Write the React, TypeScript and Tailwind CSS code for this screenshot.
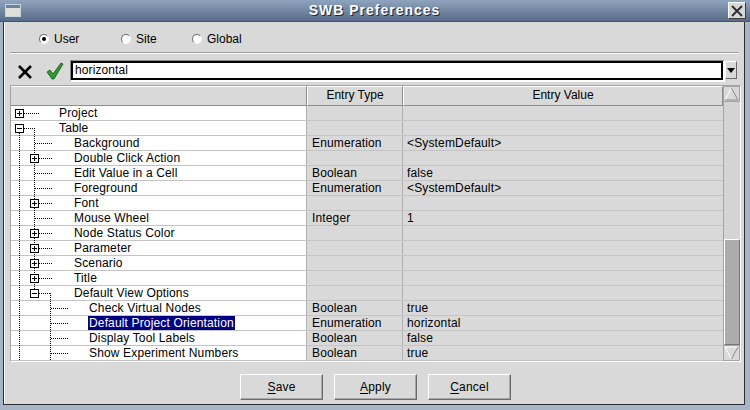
import React from "react";

type Row = {
  label: string;
  depth: 0 | 1 | 2;
  exp?: "+" | "-";
  type?: string;
  value?: string;
  selected?: boolean;
};

const rows: Row[] = [
  { label: "Project", depth: 0, exp: "+" },
  { label: "Table", depth: 0, exp: "-" },
  { label: "Background", depth: 1, type: "Enumeration", value: "<SystemDefault>" },
  { label: "Double Click Action", depth: 1, exp: "+" },
  { label: "Edit Value in a Cell", depth: 1, type: "Boolean", value: "false" },
  { label: "Foreground", depth: 1, type: "Enumeration", value: "<SystemDefault>" },
  { label: "Font", depth: 1, exp: "+" },
  { label: "Mouse Wheel", depth: 1, type: "Integer", value: "1" },
  { label: "Node Status Color", depth: 1, exp: "+" },
  { label: "Parameter", depth: 1, exp: "+" },
  { label: "Scenario", depth: 1, exp: "+" },
  { label: "Title", depth: 1, exp: "+" },
  { label: "Default View Options", depth: 1, exp: "-" },
  { label: "Check Virtual Nodes", depth: 2, type: "Boolean", value: "true" },
  { label: "Default Project Orientation", depth: 2, type: "Enumeration", value: "horizontal", selected: true },
  { label: "Display Tool Labels", depth: 2, type: "Boolean", value: "false" },
  { label: "Show Experiment Numbers", depth: 2, type: "Boolean", value: "true" },
];

const indent = ["pl-[48px]", "pl-[63px]", "pl-[78px]"];

// dotted tree guides + expander boxes, drawn over the tree column
function TreeLines() {
  const X = [8.5, 23.5, 39.5];
  const dots = { stroke: "#000", strokeWidth: 1, strokeDasharray: "1 1" };
  const els: React.ReactElement[] = [];
  els.push(<line key="v0" x1={X[0]} y1={27} x2={X[0]} y2={255} {...dots} />);
  els.push(<line key="v1" x1={X[1]} y1={22} x2={X[1]} y2={188} {...dots} />);
  els.push(<line key="v2" x1={X[2]} y1={187} x2={X[2]} y2={255} {...dots} />);

  rows.forEach((r, i) => {
    const cy = 15 * i + 7.5;
    if (r.depth === 0) {
      els.push(<line key={"h" + i} x1={13} y1={cy} x2={r.exp === "-" ? 24 : 28} y2={cy} {...dots} />);
    } else if (r.depth === 1) {
      const from = r.exp ? 28 : 24;
      const to = r.exp === "-" ? 40 : 42;
      els.push(<line key={"h" + i} x1={from} y1={cy} x2={to} y2={cy} {...dots} />);
    } else {
      els.push(<line key={"h" + i} x1={40} y1={cy} x2={57} y2={cy} {...dots} />);
    }
    if (r.exp) {
      const bx = r.depth === 0 ? 4 : 19;
      const c = bx + 4.5;
      els.push(
        <g key={"b" + i}>
          <rect x={bx + 0.5} y={cy - 4} width={8} height={8} fill="#fff" stroke="#000" />
          <line x1={bx + 2} y1={cy} x2={bx + 7} y2={cy} stroke="#000" />
          {r.exp === "+" && <line x1={c} y1={cy - 2.5} x2={c} y2={cy + 2.5} stroke="#000" />}
        </g>
      );
    }
  });

  return (
    <svg className="absolute left-0 top-0 pointer-events-none" width={296} height={255}>
      {els}
    </svg>
  );
}

function Radio({ label, checked, w }: { label: string; checked?: boolean; w: string }) {
  return (
    <div className={`flex items-center gap-[5px] ${w}`}>
      <span className="w-[10px] h-[10px] rounded-full bg-white border border-t-[#6e6e6e] border-l-[#6e6e6e] border-b-[#f4f4f4] border-r-[#f4f4f4] flex items-center justify-center">
        {checked && <span className="w-[4px] h-[4px] rounded-full bg-black" />}
      </span>
      <span>{label}</span>
    </div>
  );
}

function ArrowButton({ dir }: { dir: "up" | "down" }) {
  return (
    <svg width={17} height={16} className="block shrink-0">
      <rect x={0.5} y={0.5} width={16} height={15} fill="#d9d9d9" stroke="#a4a4a4" />
      {dir === "up" ? (
        <>
          <polygon points="8.5,2 15,14 2,14" fill="#d9d9d9" />
          <line x1={8.5} y1={2} x2={2} y2={14} stroke="#fff" />
          <line x1={8.5} y1={2} x2={15} y2={14} stroke="#8a8a8a" />
          <line x1={2} y1={14} x2={15} y2={14} stroke="#8a8a8a" />
        </>
      ) : (
        <>
          <polygon points="2,2 15,2 8.5,14" fill="#d9d9d9" />
          <line x1={2} y1={2} x2={15} y2={2} stroke="#fff" />
          <line x1={2} y1={2} x2={8.5} y2={14} stroke="#fff" />
          <line x1={15} y1={2} x2={8.5} y2={14} stroke="#8a8a8a" />
        </>
      )}
    </svg>
  );
}

function Button({ mn, rest }: { mn: string; rest: string }) {
  return (
    <button className="w-[83px] h-[26px] bg-[#d9d9d9] border border-t-white border-l-white border-b-[#6c6c6c] border-r-[#6c6c6c] shadow-[inset_-1px_-1px_0_#a6a6a6] text-[12px] tracking-[0.2px] text-black">
      <span className="underline underline-offset-2">{mn}</span>
      {rest}
    </button>
  );
}

export default function App() {
  return (
    <div className="w-[750px] h-[410px] overflow-hidden flex flex-col bg-[#a6b5c8] font-['Liberation_Sans',Arial,sans-serif] text-[12px] text-black select-none">
      {/* title bar */}
      <div className="h-[22px] flex items-center bg-linear-to-b from-[#8fa4be] to-[#586c8a] border-b border-[#44546a]">
        <div className="ml-[5px] w-[16px] h-[13px] border border-[#c9d4e1] bg-[#dedfdb] flex flex-col">
          <div className="h-[3px] bg-[#6a81a0]" />
        </div>
        <div className="flex-1 text-center text-white font-bold text-[14px] tracking-[1px] [text-shadow:1px_1px_0_#1d2838]">
          SWB Preferences
        </div>
        <div className="mr-[4px] w-[18px] h-[17px] bg-[#d8d8d8] border border-t-white border-l-white border-b-[#3c3c3c] border-r-[#3c3c3c] flex items-center justify-center">
          <svg width={12} height={12}>
            <path d="M1 1 L11 11 M11 1 L1 11" stroke="#303030" strokeWidth={2} />
          </svg>
        </div>
      </div>

      {/* window frame */}
      <div className="flex-1 flex flex-col pl-[3px] pr-[5px] pb-[5px]">
        <div className="flex-1 flex flex-col border-l border-r border-b border-[#2e2e2e] bg-[#d9d9d9]">
          <div className="flex-1 flex flex-col border-l border-white">
            {/* scope radios */}
            <div className="h-[30px] pt-[4px] pl-[34px] flex items-center">
              <Radio label="User" checked w="w-[82px]" />
              <Radio label="Site" w="w-[71px]" />
              <Radio label="Global" w="w-[80px]" />
            </div>
            <div className="mx-[5px] h-[2px] border-t border-[#9c9c9c] border-b border-b-white" />

            {/* filter row */}
            <div className="mt-[6px] h-[22px] flex items-start pl-[12px] pr-[7px]">
              <svg width={16} height={16} className="mt-[4px] shrink-0">
                <path d="M2 2 L14 14 M14 2 L2 14" stroke="#000" strokeWidth={2.6} />
              </svg>
              <svg width={18} height={18} className="ml-[13px] mt-[2px] shrink-0">
                <polygon points="1,10 4,8 7,12 15,1 17,2 8,17 6,17" fill="#2f9a2f" stroke="#145214" strokeWidth={0.8} />
              </svg>
              <div className="ml-[6px] flex-1 h-[22px] border-t border-l border-[#8a8a8a] border-b-2 border-r-2 border-b-white border-r-white">
                <div className="h-full border-2 border-black bg-white pl-[2px] leading-[14px] text-[12px] tracking-[0.1px]">
                  horizontal
                </div>
              </div>
              <div className="mt-[1px] w-[12px] h-[18px] bg-[#d9d9d9] border border-t-white border-l-white border-b-[#6c6c6c] border-r-[#6c6c6c] flex items-center justify-center">
                <svg width={8} height={5}>
                  <polygon points="0,0 8,0 4,5" fill="#000" />
                </svg>
              </div>
            </div>

            {/* preferences table */}
            <div className="mt-[3px] ml-[5px] mr-[3px] flex border border-t-[#a4a4a4] border-l-[#a4a4a4] border-b-white border-r-white">
              <div className="flex-1 flex flex-col">
                <div className="h-[20px] flex text-center">
                  <div className="w-[296px] border-t border-t-white border-b border-b-[#8c8c8c] border-r border-r-[#8c8c8c]" />
                  <div className="w-[96px] border-t border-t-white border-l border-l-white border-b border-b-[#8c8c8c] border-r border-r-[#8c8c8c] leading-[17px]">
                    Entry Type
                  </div>
                  <div className="flex-1 border-t border-t-white border-l border-l-white border-b border-b-[#8c8c8c] border-r border-r-[#8c8c8c] leading-[17px]">
                    Entry Value
                  </div>
                </div>
                <div className="relative flex flex-col">
                  {rows.map((r) => (
                    <div key={r.label} className="h-[15px] flex border-b border-[#c4c4c4] leading-[14px] tracking-[0.15px]">
                      <div className={`w-[296px] bg-white border-r border-[#b0b0b0] ${indent[r.depth]}`}>
                        {r.selected ? (
                          <span className="-ml-[1px] px-[1px] bg-[#000080] text-white">{r.label}</span>
                        ) : (
                          r.label
                        )}
                      </div>
                      <div className="w-[96px] border-r border-[#b0b0b0] pl-[5px]">{r.type}</div>
                      <div className="flex-1 pl-[4px]">{r.value}</div>
                    </div>
                  ))}
                  <TreeLines />
                </div>
              </div>

              {/* scrollbar */}
              <div className="w-[17px] flex flex-col">
                <ArrowButton dir="up" />
                <div className="flex-1 flex flex-col border-l border-[#a4a4a4]">
                  <div className="flex-1 bg-[#d4d4d4]" />
                  <div className="h-[106px] bg-[#acacac] border border-t-white border-l-white border-b-[#777] border-r-[#777]" />
                </div>
                <ArrowButton dir="down" />
              </div>
            </div>

            {/* dialog buttons */}
            <div className="mt-[12px] flex justify-center gap-[11px] pl-[2px]">
              <Button mn="S" rest="ave" />
              <Button mn="A" rest="pply" />
              <Button mn="C" rest="ancel" />
            </div>
          </div>
        </div>
      </div>
    </div>
  );
}
